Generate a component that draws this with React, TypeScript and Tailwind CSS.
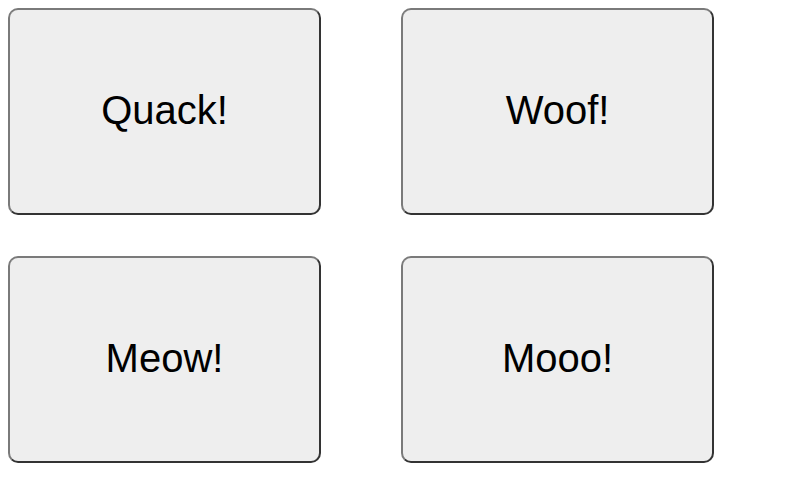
import React from "react";

const cards = ["Quack!", "Woof!", "Meow!", "Mooo!"];

export default function App() {
  return (
    <div className="w-[800px] h-[480px] bg-white relative overflow-hidden" style={{ fontFamily: '"Liberation Sans", Arial, sans-serif' }}>
      <div className="grid grid-cols-[313px_313px] gap-x-[80px] gap-y-[41px] pl-[8px] pt-[8px]">
        {cards.map((c) => (
          <div
            key={c}
            className="h-[207px] rounded-[10px] bg-[#eeeeee] border-2 border-t-[#7a7a7a] border-l-[#7a7a7a] border-r-[#333333] border-b-[#333333] flex items-center justify-center pb-[4px] text-[40px] text-black"
          >
            {c}
          </div>
        ))}
      </div>
    </div>
  );
}
